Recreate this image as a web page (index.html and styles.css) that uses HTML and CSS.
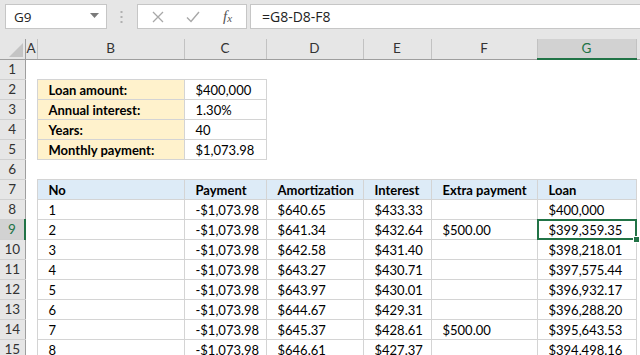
FILE: index.html
```html
<!DOCTYPE html>
<html lang="en">
<head>
    <meta charset="UTF-8">
    <meta name="viewport" content="width=device-width, initial-scale=1.0">
    <title>Loan schedule</title>
    <link rel="stylesheet" href="styles.css">
</head>
<body>
    <div class="formula-bar">
        <div class="name-box">
            <span>G9</span>
            <svg class="drop" width="9" height="5" viewBox="0 0 9 5"><path d="M0 0H9L4.5 5Z" fill="#7a7a7a"/></svg>
        </div>
        <svg class="grip" width="3" height="12" viewBox="0 0 3 12">
            <rect x="0.5" y="0" width="2" height="2" fill="#b0b0b0"/>
            <rect x="0.5" y="5" width="2" height="2" fill="#b0b0b0"/>
            <rect x="0.5" y="10" width="2" height="2" fill="#b0b0b0"/>
        </svg>
        <div class="fx-buttons">
            <svg width="12" height="12" viewBox="0 0 12 12"><path d="M1 1L11 11M11 1L1 11" stroke="#a8a8a8" stroke-width="1.3" fill="none"/></svg>
            <svg width="14" height="12" viewBox="0 0 14 12"><path d="M1 6.5L5 10.5L13 1" stroke="#a8a8a8" stroke-width="1.4" fill="none"/></svg>
            <span class="fx">f<sub>x</sub></span>
        </div>
        <div class="formula-input">=G8-D8-F8</div>
    </div>

    <table class="sheet">
        <colgroup>
            <col class="c-rh"><col class="c-a"><col class="c-b"><col class="c-c"><col class="c-d">
            <col class="c-e"><col class="c-f"><col class="c-g"><col class="c-h">
        </colgroup>
        <thead>
            <tr>
                <th class="corner"><svg width="16" height="16" viewBox="0 0 16 16"><path d="M16 2V16H2Z" fill="#c4c4c4"/></svg></th>
                <th>A</th><th>B</th><th>C</th><th>D</th><th>E</th><th>F</th><th class="sel">G</th><th></th>
            </tr>
        </thead>
        <tbody>
            <tr><th>1</th><td></td><td></td><td></td><td></td><td></td><td></td><td></td><td></td></tr>
            <tr><th>2</th><td></td><td class="t lbl">Loan amount:</td><td class="t">$400,000</td><td></td><td></td><td></td><td></td><td></td></tr>
            <tr><th>3</th><td></td><td class="t lbl">Annual interest:</td><td class="t">1.30%</td><td></td><td></td><td></td><td></td><td></td></tr>
            <tr><th>4</th><td></td><td class="t lbl">Years:</td><td class="t">40</td><td></td><td></td><td></td><td></td><td></td></tr>
            <tr><th>5</th><td></td><td class="t lbl">Monthly payment:</td><td class="t">$1,073.98</td><td></td><td></td><td></td><td></td><td></td></tr>
            <tr><th>6</th><td></td><td></td><td></td><td></td><td></td><td></td><td></td><td></td></tr>
            <tr><th>7</th><td></td><td class="t hd">No</td><td class="t hd">Payment</td><td class="t hd">Amortization</td><td class="t hd">Interest</td><td class="t hd">Extra payment</td><td class="t hd">Loan</td><td></td></tr>
            <tr><th>8</th><td></td><td class="t">1</td><td class="t">-$1,073.98</td><td class="t">$640.65</td><td class="t">$433.33</td><td class="t"></td><td class="t">$400,000</td><td></td></tr>
            <tr><th class="sel">9</th><td></td><td class="t">2</td><td class="t">-$1,073.98</td><td class="t">$641.34</td><td class="t">$432.64</td><td class="t">$500.00</td><td class="t active">$399,359.35</td><td></td></tr>
            <tr><th>10</th><td></td><td class="t">3</td><td class="t">-$1,073.98</td><td class="t">$642.58</td><td class="t">$431.40</td><td class="t"></td><td class="t">$398,218.01</td><td></td></tr>
            <tr><th>11</th><td></td><td class="t">4</td><td class="t">-$1,073.98</td><td class="t">$643.27</td><td class="t">$430.71</td><td class="t"></td><td class="t">$397,575.44</td><td></td></tr>
            <tr><th>12</th><td></td><td class="t">5</td><td class="t">-$1,073.98</td><td class="t">$643.97</td><td class="t">$430.01</td><td class="t"></td><td class="t">$396,932.17</td><td></td></tr>
            <tr><th>13</th><td></td><td class="t">6</td><td class="t">-$1,073.98</td><td class="t">$644.67</td><td class="t">$429.31</td><td class="t"></td><td class="t">$396,288.20</td><td></td></tr>
            <tr><th>14</th><td></td><td class="t">7</td><td class="t">-$1,073.98</td><td class="t">$645.37</td><td class="t">$428.61</td><td class="t">$500.00</td><td class="t">$395,643.53</td><td></td></tr>
            <tr><th>15</th><td></td><td class="t">8</td><td class="t">-$1,073.98</td><td class="t">$646.61</td><td class="t">$427.37</td><td class="t"></td><td class="t">$394,498.16</td><td></td></tr>
        </tbody>
    </table>
</body>
</html>
```

FILE: styles.css
```css
body {
    margin: 0;
    background: #fff;
    font-family: Lato, 'Liberation Sans', sans-serif;
    font-size: 13px;
    color: #000;
    overflow: hidden;
}
.formula-bar {
    display: flex;
    align-items: flex-start;
    height: 39px;
    padding: 4px 0 0 5px;
    box-sizing: border-box;
    background: #e6e6e6;
}
.name-box {
    display: flex;
    align-items: center;
    justify-content: space-between;
    width: 102px;
    height: 25px;
    box-sizing: border-box;
    padding: 0 7px 0 8px;
    background: #fff;
    border: 1px solid #c6c6c6;
    font-family: 'Open Sans', sans-serif;
    font-size: 13.5px;
    color: #222;
}
.name-box .drop {
    margin-top: -3px;
}
.grip {
    margin: 7px 14px 0 13px;
}
.fx-buttons {
    display: flex;
    align-items: center;
    width: 110px;
    height: 25px;
    box-sizing: border-box;
    padding: 0 0 0 14px;
    gap: 22px;
    background: #fff;
    border: 1px solid #c6c6c6;
}
.fx {
    font-family: 'Liberation Serif', serif;
    font-style: italic;
    font-size: 15px;
    color: #555;
    margin-left: 1px;
}
.fx sub {
    font-size: 11px;
    vertical-align: -1px;
}
.formula-input {
    flex: 1;
    height: 25px;
    box-sizing: border-box;
    margin-left: 3px;
    padding: 0 0 0 11px;
    line-height: 23px;
    background: #fff;
    border: 1px solid #c6c6c6;
    border-right: none;
    font-family: 'Open Sans', sans-serif;
    font-size: 14px;
    color: #222;
}

.sheet {
    table-layout: fixed;
    border-collapse: collapse;
    width: 676px;
}
.c-rh { width: 25px; }
.c-a { width: 12px; }
.c-b { width: 147px; }
.c-c { width: 82px; }
.c-d { width: 97px; }
.c-e { width: 68px; }
.c-f { width: 106px; }
.c-g { width: 99px; }
.c-h { width: 40px; }

.sheet tr {
    height: 20px;
}
.sheet th {
    padding: 0;
    background: #e6e6e6;
    font-weight: normal;
    font-size: 13.5px;
    color: #333;
    text-align: center;
    line-height: 19px;
}
.sheet thead th {
    border-right: 1px solid #c2c2c2;
    border-bottom: 1px solid #9e9e9e;
}
.sheet thead th.corner {
    position: relative;
    border-right: 1px solid #9e9e9e;
}
.corner svg {
    position: absolute;
    right: 2px;
    bottom: 2px;
}
.sheet thead th.sel {
    background: #d2d2d2;
    color: #217346;
    border-bottom: 2px solid #217346;
}
.sheet tbody th {
    border-right: 1px solid #9e9e9e;
    border-bottom: 1px solid #d0d0d0;
}
.sheet tbody th.sel {
    background: #d2d2d2;
    color: #217346;
    border-right: 2px solid #217346;
}
.sheet td {
    padding: 2px 0 0 11px;
    line-height: 17px;
    white-space: nowrap;
    overflow: hidden;
}
.sheet td.t {
    border: 1px solid #d4d4d4;
}
.sheet td.lbl {
    background: #fff2cc;
    font-weight: bold;
}
.sheet td.hd {
    background: #ddebf7;
    font-weight: bold;
}
.sheet td.active {
    position: relative;
    overflow: visible;
}
.active::after {
    content: '';
    position: absolute;
    left: -1px;
    top: -1px;
    right: -1px;
    bottom: -1px;
    border: 2px solid #217346;
}
.active::before {
    content: '';
    position: absolute;
    right: -4px;
    bottom: -4px;
    width: 5px;
    height: 5px;
    background: #217346;
    border: 1px solid #fff;
    z-index: 1;
}
```
